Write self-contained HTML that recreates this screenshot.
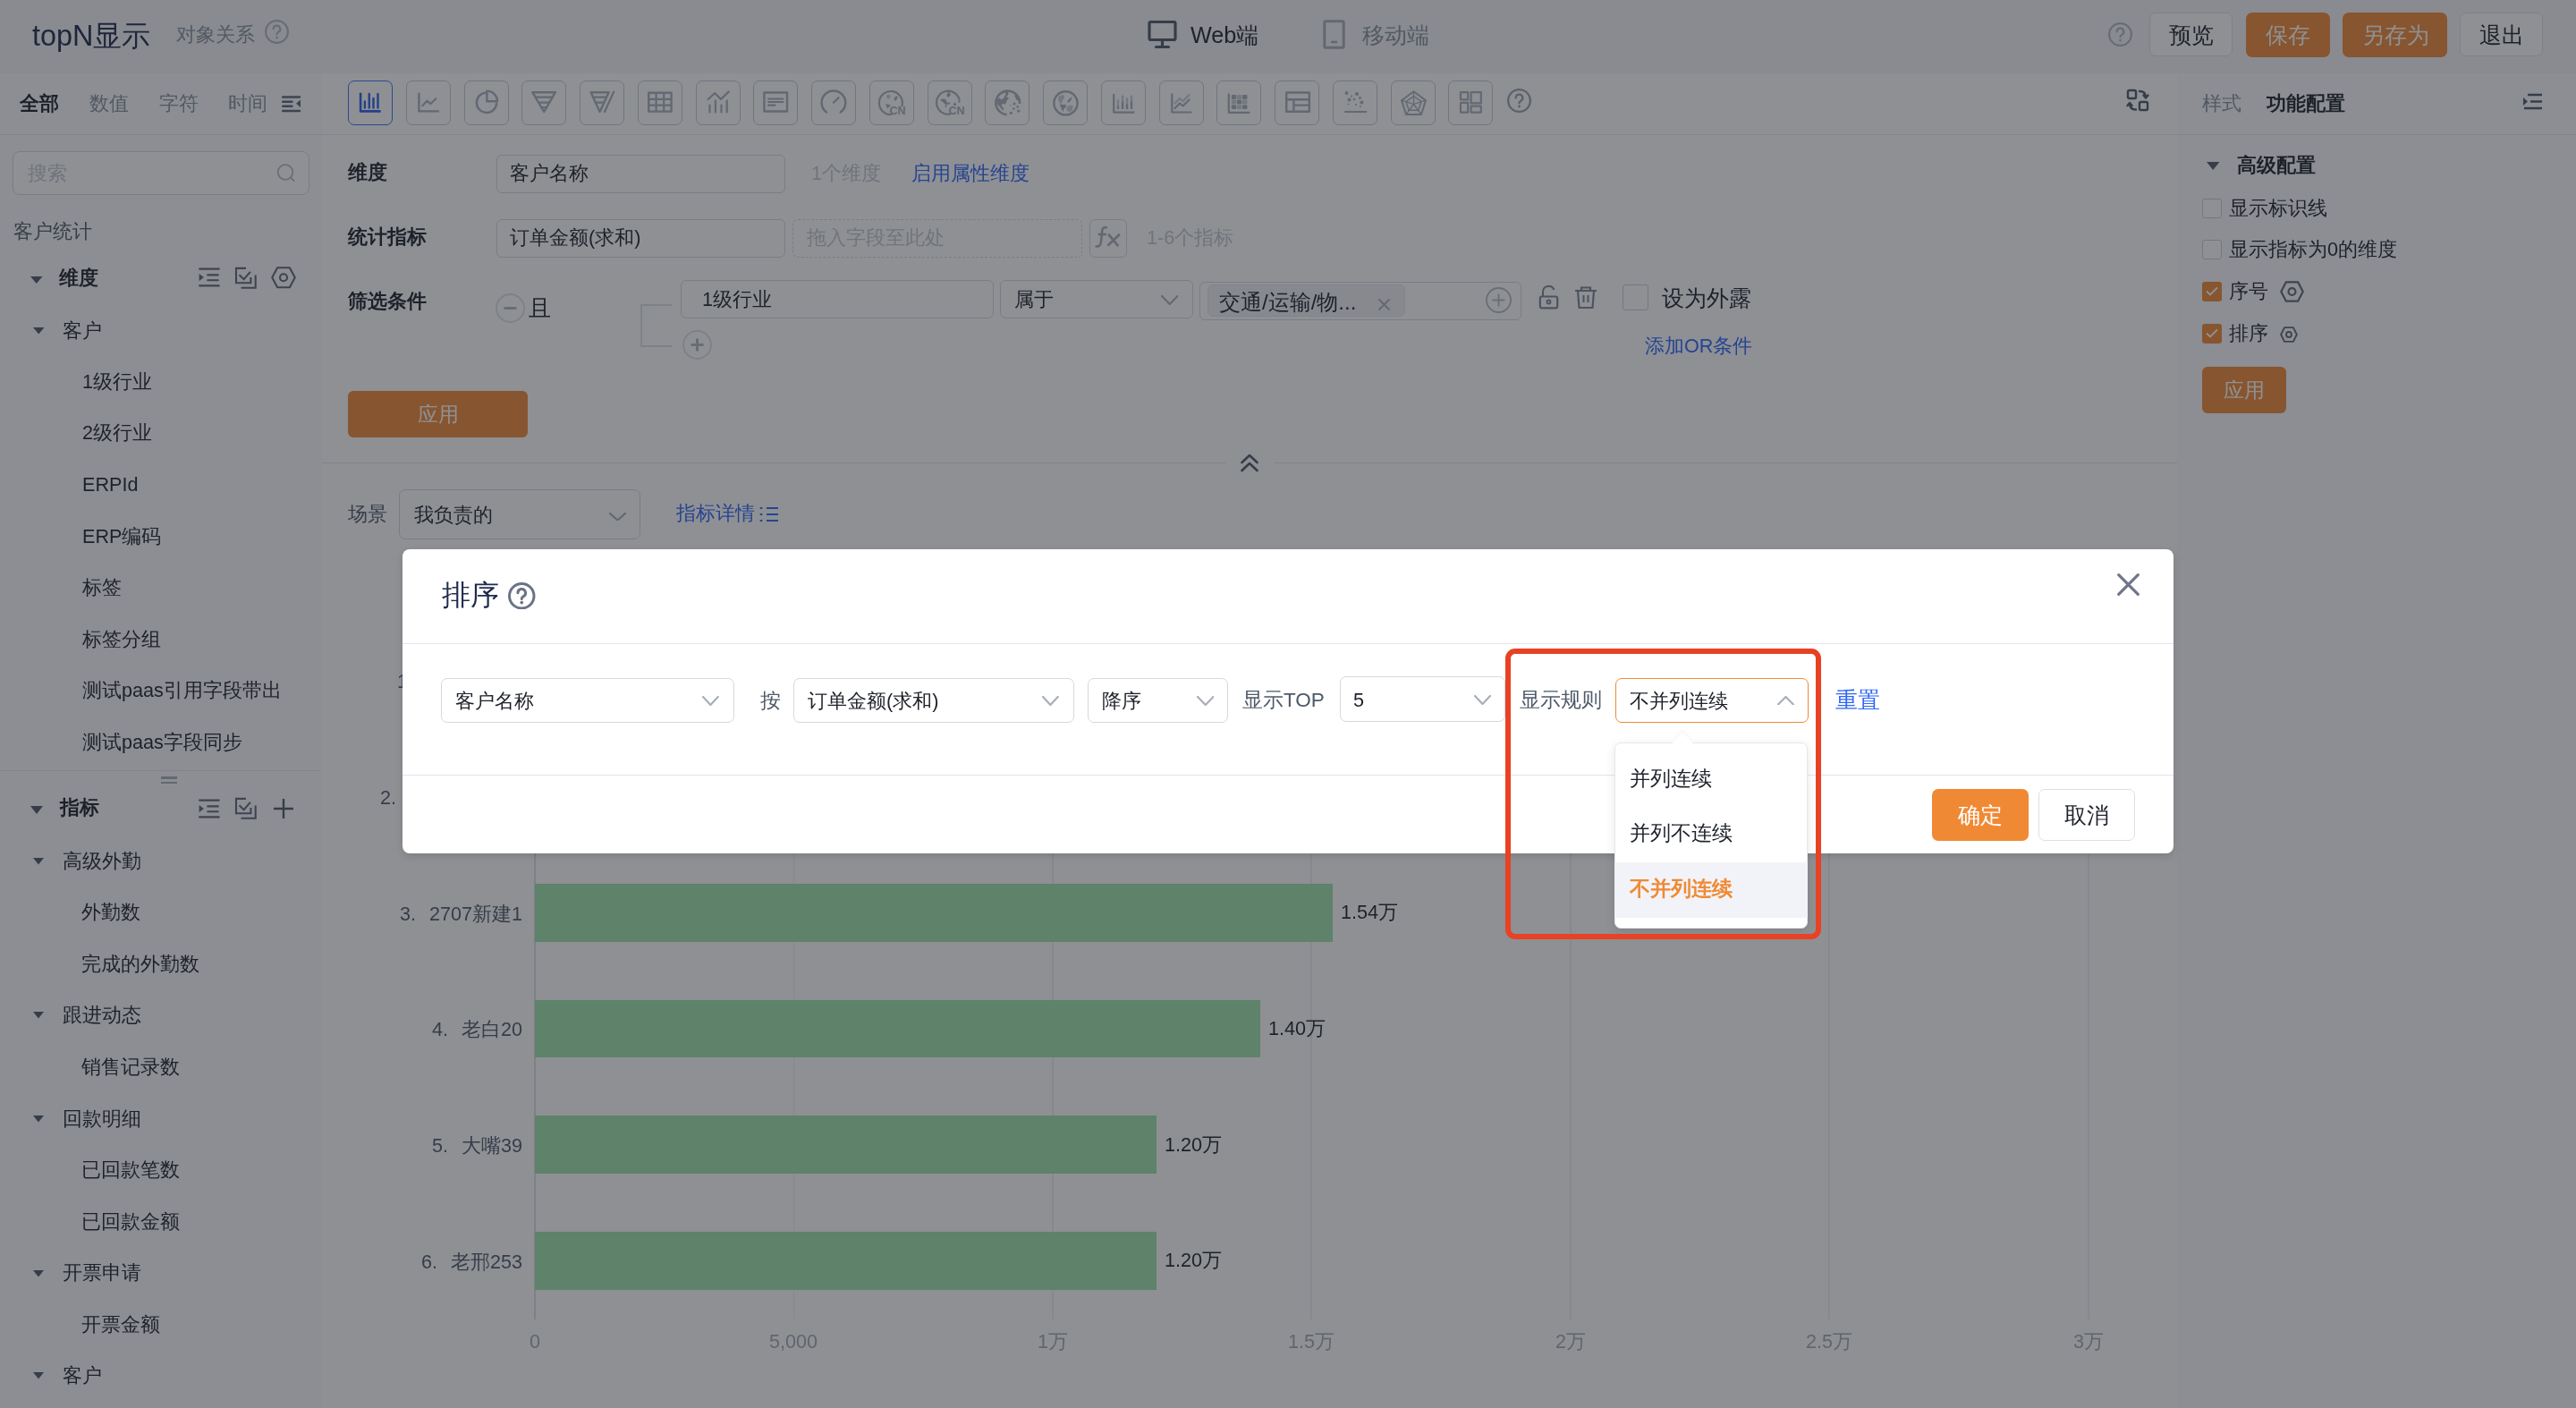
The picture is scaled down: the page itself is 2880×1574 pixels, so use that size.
<!DOCTYPE html><html><head><meta charset="utf-8"><style>
html,body{margin:0;padding:0}
body{width:2880px;height:1574px;position:relative;overflow:hidden;background:#fff;font-family:"Liberation Sans",sans-serif}
.t{position:absolute;white-space:nowrap;will-change:transform}
.b{position:absolute;box-sizing:border-box}
</style></head><body>
<div class="b" style="left:0px;top:0px;width:2880px;height:82px;background:#f4f5f7"></div>
<div class="b" style="left:0px;top:82px;width:360px;height:1492px;background:#fbfbfc"></div>
<div class="b" style="left:360px;top:82px;width:2074px;height:1492px;background:#ffffff"></div>
<div class="b" style="left:2434px;top:82px;width:446px;height:1492px;background:#fbfbfc"></div>
<div class="b" style="left:0px;top:150px;width:2880px;height:1px;background:#e5e6eb"></div>
<div class="t" style="left:36px;top:15.5px;font-size:32.4px;line-height:49px;color:#1f2a4d;font-weight:400;">topN显示</div>
<div class="t" style="left:197px;top:22.5px;font-size:21.6px;line-height:32px;color:#86909c;font-weight:400;">对象关系</div>
<svg class="b" style="left:296.0px;top:21.5px;" width="27" height="27" viewBox="0 0 27 27" fill="none"><g transform="scale(1.125)"><circle cx="12" cy="12" r="11.022222222222222" stroke="#b2b7c0" stroke-width="1.9555555555555557"/><path d="M8.6 9.3 A3.4 3.4 0 1 1 13.6 12.3 C12.6 12.8 12 13.4 12 14.6" stroke="#b2b7c0" stroke-width="1.9555555555555557" stroke-linecap="round" fill="none"/><circle cx="12" cy="17.8" r="1.2124444444444444" fill="#b2b7c0"/></g></svg>
<svg class="b" style="left:1283px;top:22px;" width="33" height="33" viewBox="0 0 33 33" fill="none"><rect x="2" y="2.5" width="29" height="20" rx="1.5" stroke="#4e5969" stroke-width="3.2"/><path d="M16.5 23 V30" stroke="#4e5969" stroke-width="3.2"/><path d="M9.5 30.5 H23.5" stroke="#4e5969" stroke-width="3.2" stroke-linecap="round"/></svg>
<div class="t" style="left:1331px;top:20.0px;font-size:25.2px;line-height:38px;color:#1d2129;font-weight:400;">Web端</div>
<svg class="b" style="left:1479px;top:22px;" width="25" height="33" viewBox="0 0 25 33" fill="none"><rect x="1.8" y="1.8" width="21.4" height="29.4" rx="1.5" stroke="#a9aeb8" stroke-width="3"/><path d="M9 25 H16" stroke="#a9aeb8" stroke-width="2.6"/></svg>
<div class="t" style="left:1523px;top:20.0px;font-size:25.2px;line-height:38px;color:#86909c;font-weight:400;">移动端</div>
<svg class="b" style="left:2357.0px;top:24.5px;" width="27" height="27" viewBox="0 0 27 27" fill="none"><g transform="scale(1.125)"><circle cx="12" cy="12" r="11.022222222222222" stroke="#b2b7c0" stroke-width="1.9555555555555557"/><path d="M8.6 9.3 A3.4 3.4 0 1 1 13.6 12.3 C12.6 12.8 12 13.4 12 14.6" stroke="#b2b7c0" stroke-width="1.9555555555555557" stroke-linecap="round" fill="none"/><circle cx="12" cy="17.8" r="1.2124444444444444" fill="#b2b7c0"/></g></svg>
<div class="b" style="left:2403px;top:14px;width:93px;height:49px;background:#fff;border:1.8px solid #dcdfe6;border-radius:7px"></div>
<div class="t" style="left:2249.5px;width:400px;text-align:center;top:19.5px;font-size:25.2px;line-height:38px;color:#1d2129;font-weight:400;">预览</div>
<div class="b" style="left:2511px;top:14px;width:94px;height:50px;background:#f08934;border-radius:7px"></div>
<div class="t" style="left:2358px;width:400px;text-align:center;top:20.0px;font-size:25.2px;line-height:38px;color:#fff;font-weight:400;">保存</div>
<div class="b" style="left:2619px;top:14px;width:117px;height:50px;background:#f08934;border-radius:7px"></div>
<div class="t" style="left:2477.5px;width:400px;text-align:center;top:20.0px;font-size:25.2px;line-height:38px;color:#fff;font-weight:400;">另存为</div>
<div class="b" style="left:2750px;top:14px;width:93px;height:49px;background:#fff;border:1.8px solid #dcdfe6;border-radius:7px"></div>
<div class="t" style="left:2596.5px;width:400px;text-align:center;top:19.5px;font-size:25.2px;line-height:38px;color:#1d2129;font-weight:400;">退出</div>
<div class="t" style="left:21.5px;top:99.5px;font-size:21.6px;line-height:32px;color:#1d2129;font-weight:700;">全部</div>
<div class="t" style="left:99.5px;top:99.5px;font-size:21.6px;line-height:32px;color:#86909c;font-weight:400;">数值</div>
<div class="t" style="left:178px;top:99.5px;font-size:21.6px;line-height:32px;color:#86909c;font-weight:400;">字符</div>
<div class="t" style="left:255px;top:99.5px;font-size:21.6px;line-height:32px;color:#86909c;font-weight:400;">时间</div>
<svg class="b" style="left:315px;top:106px;" width="22" height="20" viewBox="0 0 22 20" fill="none"><path d="M1.2 2.5 H20 M1.2 7.8 H11.5 M1.2 12.8 H11.5 M1.2 18 H20" stroke="#5c6475" stroke-width="2.4" stroke-linecap="round"/><path d="M21 5.5 V14 L16 9.75 Z" fill="#5c6475"/></svg>
<div class="b" style="left:389.00px;top:90px;width:50px;height:50px;border:1.8px solid #3b6ff5;border-radius:7px"></div>
<svg class="b" style="left:389.00px;top:90px" width="50" height="50" viewBox="0 0 50 50" fill="none"><path d="M14.1 13.8 V34.4 H36.6" stroke="#2d5ee8" stroke-width="2.6" stroke-linecap="butt" stroke-linejoin="round"/><path d="M18.9 23.5 V30.6 M23.75 15 V30.6 M28.5 20 V30.6 M33.5 15 V30.6" stroke="#2d5ee8" stroke-width="2.4" stroke-linecap="round" stroke-linejoin="round"/></svg>
<div class="b" style="left:453.75px;top:90px;width:50px;height:50px;border:1.8px solid #c4c8d0;border-radius:7px"></div>
<svg class="b" style="left:453.75px;top:90px" width="50" height="50" viewBox="0 0 50 50" fill="none"><path d="M14.4 13.8 V34.4 H36.9" stroke="#a8aebb" stroke-width="2.4" stroke-linecap="butt" stroke-linejoin="round"/><path d="M18.3 28.2 L23.6 22.6 L27.2 26.2 L33.4 20.2" stroke="#a8aebb" stroke-width="2.2" stroke-linecap="round" stroke-linejoin="round"/></svg>
<div class="b" style="left:518.50px;top:90px;width:50px;height:50px;border:1.8px solid #c4c8d0;border-radius:7px"></div>
<svg class="b" style="left:518.50px;top:90px" width="50" height="50" viewBox="0 0 50 50" fill="none"><path d="M24 13.6 A11.2 11.2 0 1 0 36.2 25.6" stroke="#a8aebb" stroke-width="2.4" stroke-linecap="round" stroke-linejoin="round"/><path d="M25.4 11.6 V23.2 H37 A11.6 11.6 0 0 0 25.4 11.6 Z" stroke="#a8aebb" stroke-width="2.4" stroke-linecap="round" stroke-linejoin="round"/></svg>
<div class="b" style="left:583.25px;top:90px;width:50px;height:50px;border:1.8px solid #c4c8d0;border-radius:7px"></div>
<svg class="b" style="left:583.25px;top:90px" width="50" height="50" viewBox="0 0 50 50" fill="none"><path d="M12.3 13.2 H37.9 L25.25 35 Z" stroke="#a8aebb" stroke-width="2.4" stroke-linecap="round" stroke-linejoin="round"/><path d="M15.6 18.6 H34.8 M19.2 24.6 H31.3 M22.4 30 H28.1" stroke="#a8aebb" stroke-width="2.2" stroke-linecap="round" stroke-linejoin="round"/></svg>
<div class="b" style="left:648.00px;top:90px;width:50px;height:50px;border:1.8px solid #c4c8d0;border-radius:7px"></div>
<svg class="b" style="left:648.00px;top:90px" width="50" height="50" viewBox="0 0 50 50" fill="none"><path d="M12.6 13.2 H32.6 L22.6 35 Z" stroke="#a8aebb" stroke-width="2.4" stroke-linecap="round" stroke-linejoin="round"/><path d="M15.4 18.6 H29.8 M18.2 24.6 H27 M38.2 12.6 L28 35" stroke="#a8aebb" stroke-width="2.2" stroke-linecap="round" stroke-linejoin="round"/></svg>
<div class="b" style="left:712.75px;top:90px;width:50px;height:50px;border:1.8px solid #c4c8d0;border-radius:7px"></div>
<svg class="b" style="left:712.75px;top:90px" width="50" height="50" viewBox="0 0 50 50" fill="none"><rect x="12.2" y="13.8" width="25.4" height="20.8" stroke="#a8aebb" stroke-width="2.4" stroke-linecap="butt" stroke-linejoin="round"/><path d="M12.2 20.8 H37.6 M12.2 27.6 H37.6 M20.6 13.8 V34.6 M29.2 13.8 V34.6" stroke="#a8aebb" stroke-width="2.2" stroke-linecap="butt" stroke-linejoin="round"/></svg>
<div class="b" style="left:777.50px;top:90px;width:50px;height:50px;border:1.8px solid #c4c8d0;border-radius:7px"></div>
<svg class="b" style="left:777.50px;top:90px" width="50" height="50" viewBox="0 0 50 50" fill="none"><path d="M13.6 21 L21.3 14 L27.9 20.9 L36.9 12.4" stroke="#a8aebb" stroke-width="2.2" stroke-linecap="round" stroke-linejoin="round"/><path d="M15.5 27.5 V35.5 M21.9 22.5 V35.5 M28.5 27.5 V35.5 M34.7 22.5 V35.5" stroke="#a8aebb" stroke-width="2.2" stroke-linecap="round" stroke-linejoin="round"/></svg>
<div class="b" style="left:842.25px;top:90px;width:50px;height:50px;border:1.8px solid #c4c8d0;border-radius:7px"></div>
<svg class="b" style="left:842.25px;top:90px" width="50" height="50" viewBox="0 0 50 50" fill="none"><rect x="12.4" y="13.5" width="25.6" height="21" stroke="#a8aebb" stroke-width="2.4" stroke-linecap="butt" stroke-linejoin="round"/><path d="M17.1 20.5 H33.4 M17.1 24 H33.4 M17.1 27.7 H24.5" stroke="#a8aebb" stroke-width="2.2" stroke-linecap="round" stroke-linejoin="round"/></svg>
<div class="b" style="left:907.00px;top:90px;width:50px;height:50px;border:1.8px solid #c4c8d0;border-radius:7px"></div>
<svg class="b" style="left:907.00px;top:90px" width="50" height="50" viewBox="0 0 50 50" fill="none"><path d="M17.2 35.6 A13.3 13.3 0 1 1 32.6 35.6" stroke="#a8aebb" stroke-width="2.4" stroke-linecap="round" stroke-linejoin="round"/><path d="M24.9 24.8 L30.6 19.2" stroke="#a8aebb" stroke-width="2.2" stroke-linecap="round" stroke-linejoin="round"/></svg>
<div class="b" style="left:971.75px;top:90px;width:50px;height:50px;border:1.8px solid #c4c8d0;border-radius:7px"></div>
<svg class="b" style="left:971.75px;top:90px" width="50" height="50" viewBox="0 0 50 50" fill="none"><path d="M36.4 28.5 A13 13 0 1 0 24.5 38" stroke="#a8aebb" stroke-width="2.2" stroke-linecap="round" stroke-linejoin="round"/><path d="M19 17 Q22 14.5 24 17.5 Q23 21 20 20.5 Z" fill="#cbcfd7"/><path d="M27.5 20 Q30 16 31.5 18 Q31 22 28.5 23 Z M18 26 L24 27.5 L20 31.5 Z" fill="#a8aebb"/><text x="22.5" y="38.2" font-size="12.5" font-weight="700" fill="#a8aebb" font-family="Liberation Sans">CN</text></svg>
<div class="b" style="left:1036.50px;top:90px;width:50px;height:50px;border:1.8px solid #c4c8d0;border-radius:7px"></div>
<svg class="b" style="left:1036.50px;top:90px" width="50" height="50" viewBox="0 0 50 50" fill="none"><path d="M35.5 21 A13 13 0 1 0 25 37.6" stroke="#a8aebb" stroke-width="2.2" stroke-linecap="round" stroke-linejoin="round"/><path d="M14 22 Q17 19 20 21 L23 26 L21 28 L17 24 Z M23.5 11.8 L26 16 L23 19 L21 17 Z" fill="#a8aebb"/><circle cx="24" cy="25.5" r="1.2" fill="#a8aebb"/><circle cx="30.5" cy="26.5" r="1.6" fill="#a8aebb"/><circle cx="35.5" cy="23.5" r="1.2" fill="#a8aebb"/><circle cx="20.5" cy="29" r="1" fill="#a8aebb"/><text x="23.5" y="38.2" font-size="12.5" font-weight="700" fill="#a8aebb" font-family="Liberation Sans">CN</text></svg>
<div class="b" style="left:1101.25px;top:90px;width:50px;height:50px;border:1.8px solid #c4c8d0;border-radius:7px"></div>
<svg class="b" style="left:1101.25px;top:90px" width="50" height="50" viewBox="0 0 50 50" fill="none"><path d="M39 26 A13.3 13.3 0 1 0 24.6 38.2" stroke="#a8aebb" stroke-width="2.6" stroke-linecap="butt" stroke-linejoin="round"/><path d="M13 22 L16.5 19.5 L19 21.5 L21.5 19 L23.5 15 L22 12.5 L25.5 11.5 L26.5 15.5 L24 18 L27 20 L24.5 22.5 L23 27 L20 25.5 L18.5 28 L21.5 31.5 L20 33.5 L17 29.5 L14.5 27 Z" fill="#a8aebb"/><path d="M33.5 14.5 L37 18.5 L38.5 23 L35.5 21.5 L33.5 18 Z" fill="#a8aebb"/><circle cx="33" cy="26" r="1.5" fill="#a8aebb"/><circle cx="28.6" cy="27.9" r="0.7" fill="#a8aebb"/><circle cx="36.7" cy="29.3" r="1.2" fill="#a8aebb"/><circle cx="32.3" cy="31.6" r="1.25" fill="#a8aebb"/><circle cx="37.8" cy="34.1" r="1.7" fill="#a8aebb"/><circle cx="29.4" cy="36.3" r="1.6" fill="#a8aebb"/></svg>
<div class="b" style="left:1166.00px;top:90px;width:50px;height:50px;border:1.8px solid #c4c8d0;border-radius:7px"></div>
<svg class="b" style="left:1166.00px;top:90px" width="50" height="50" viewBox="0 0 50 50" fill="none"><circle cx="25.45" cy="25.3" r="13.1" stroke="#a8aebb" stroke-width="2.4" stroke-linecap="round" stroke-linejoin="round"/><path d="M17.5 18 Q20 15.5 23.5 16.5 Q24.8 19 23 21 Q21 23 20.5 26.5 Q18 25 17.2 22 Z" fill="#cbcfd7"/><path d="M27 23.5 Q28.5 20 32.8 18.3 Q32 22.5 29 24.8 Z" fill="#a8aebb"/><path d="M18.5 27 Q22.5 26.2 26.5 27.5 Q25.5 30.5 23.5 31.5 L22.5 35 Q20.5 32 20 29.5 Z" fill="#a8aebb"/><path d="M26.5 30 Q30 26.5 33.5 28 Q34 32.5 31 35 Q27.5 35.5 26.5 33 Z" fill="#cbcfd7"/></svg>
<div class="b" style="left:1230.75px;top:90px;width:50px;height:50px;border:1.8px solid #c4c8d0;border-radius:7px"></div>
<svg class="b" style="left:1230.75px;top:90px" width="50" height="50" viewBox="0 0 50 50" fill="none"><path d="M14.2 15 V35.6 H37.4" stroke="#a8aebb" stroke-width="2.2" stroke-linecap="butt" stroke-linejoin="round"/><path d="M19 27.9 V31.9 M24.1 23 V31.9 M29 25.7 V31.9 M34 23 V31.9" stroke="#a8aebb" stroke-width="2.4" stroke-linecap="butt" stroke-linejoin="round"/><path d="M19 22.3 V27.5 M24.1 17.5 V22.7 M29 20.1 V25.3 M34 17.5 V22.7" stroke="#cbcfd7" stroke-width="2.4" stroke-linecap="round" stroke-linejoin="round"/></svg>
<div class="b" style="left:1295.50px;top:90px;width:50px;height:50px;border:1.8px solid #c4c8d0;border-radius:7px"></div>
<svg class="b" style="left:1295.50px;top:90px" width="50" height="50" viewBox="0 0 50 50" fill="none"><path d="M14.3 14.6 V35.5 H36.5" stroke="#a8aebb" stroke-width="2.2" stroke-linecap="butt" stroke-linejoin="round"/><path d="M17.5 31 L23 25.5 L26.5 28.5 L33.5 21.5" stroke="#a8aebb" stroke-width="2.2" stroke-linecap="round" stroke-linejoin="round"/><path d="M17.5 25.5 L23 20 L26.5 23 L33.5 16" stroke="#cbcfd7" stroke-width="2.2" stroke-linecap="round" stroke-linejoin="round"/></svg>
<div class="b" style="left:1360.25px;top:90px;width:50px;height:50px;border:1.8px solid #c4c8d0;border-radius:7px"></div>
<svg class="b" style="left:1360.25px;top:90px" width="50" height="50" viewBox="0 0 50 50" fill="none"><path d="M13.75 14.6 V35.9 H37.25" stroke="#a8aebb" stroke-width="2.2" stroke-linecap="butt" stroke-linejoin="round"/><rect x="16.8" y="16.0" width="5.4" height="4.9" rx="1" fill="#a8aebb"/><rect x="22.9" y="16.0" width="5.4" height="4.9" rx="1" fill="#cbcfd7"/><rect x="29.0" y="16.0" width="5.4" height="4.9" rx="1" fill="#a8aebb"/><rect x="16.8" y="21.6" width="5.4" height="4.9" rx="1" fill="#cbcfd7"/><rect x="22.9" y="21.6" width="5.4" height="4.9" rx="1" fill="#a8aebb"/><rect x="29.0" y="21.6" width="5.4" height="4.9" rx="1" fill="#cbcfd7"/><rect x="16.8" y="27.2" width="5.4" height="4.9" rx="1" fill="#a8aebb"/><rect x="22.9" y="27.2" width="5.4" height="4.9" rx="1" fill="#cbcfd7"/><rect x="29.0" y="27.2" width="5.4" height="4.9" rx="1" fill="#a8aebb"/></svg>
<div class="b" style="left:1425.00px;top:90px;width:50px;height:50px;border:1.8px solid #c4c8d0;border-radius:7px"></div>
<svg class="b" style="left:1425.00px;top:90px" width="50" height="50" viewBox="0 0 50 50" fill="none"><rect x="13.2" y="13.5" width="25.6" height="21.2" stroke="#a8aebb" stroke-width="2.4" stroke-linecap="butt" stroke-linejoin="round"/><path d="M13.2 21.2 H38.8 M21.4 21.2 V34.7 M21.4 27.6 H38.8" stroke="#a8aebb" stroke-width="2.4" stroke-linecap="butt" stroke-linejoin="round"/></svg>
<div class="b" style="left:1489.75px;top:90px;width:50px;height:50px;border:1.8px solid #c4c8d0;border-radius:7px"></div>
<svg class="b" style="left:1489.75px;top:90px" width="50" height="50" viewBox="0 0 50 50" fill="none"><circle cx="15.5" cy="14" r="1.9" fill="#a8aebb"/><circle cx="21" cy="17.5" r="1.1" fill="#a8aebb"/><circle cx="27" cy="15" r="2.1" fill="#a8aebb"/><circle cx="18.5" cy="21.5" r="2" fill="#a8aebb"/><circle cx="24" cy="21" r="1.3" fill="#a8aebb"/><circle cx="30.5" cy="19.5" r="1.4" fill="#a8aebb"/><circle cx="32.5" cy="24.5" r="2" fill="#a8aebb"/><circle cx="17.5" cy="26.5" r="0.9" fill="#a8aebb"/><circle cx="26" cy="27" r="1.1" fill="#a8aebb"/><circle cx="31" cy="29" r="0.9" fill="#a8aebb"/><path d="M14 35 H37.2" stroke="#a8aebb" stroke-width="2.2" stroke-linecap="round" stroke-linejoin="round"/></svg>
<div class="b" style="left:1554.50px;top:90px;width:50px;height:50px;border:1.8px solid #c4c8d0;border-radius:7px"></div>
<svg class="b" style="left:1554.50px;top:90px" width="50" height="50" viewBox="0 0 50 50" fill="none"><path d="M25.5 12.3 L39 22.2 L34 38 H17 L12 22.2 Z" stroke="#a8aebb" stroke-width="2" stroke-linecap="round" stroke-linejoin="round"/><path d="M25.5 17.5 L34 23.7 L30.8 33.2 H20.2 L17 23.7 Z" stroke="#a8aebb" stroke-width="1.5" stroke-linecap="round" stroke-linejoin="round"/><path d="M25.5 12.3 V26.5 M39 22.2 L25.5 26.5 M34 38 L25.5 26.5 M17 38 L25.5 26.5 M12 22.2 L25.5 26.5" stroke="#a8aebb" stroke-width="1.3" stroke-linecap="round" stroke-linejoin="round"/></svg>
<div class="b" style="left:1619.25px;top:90px;width:50px;height:50px;border:1.8px solid #c4c8d0;border-radius:7px"></div>
<svg class="b" style="left:1619.25px;top:90px" width="50" height="50" viewBox="0 0 50 50" fill="none"><rect x="14" y="13.2" width="8.2" height="8.2" stroke="#a8aebb" stroke-width="2.2" stroke-linecap="butt" stroke-linejoin="round"/><rect x="25.6" y="13.2" width="11.2" height="12.2" stroke="#a8aebb" stroke-width="2.2" stroke-linecap="butt" stroke-linejoin="round"/><rect x="14" y="24.8" width="8.2" height="10.8" stroke="#a8aebb" stroke-width="2.2" stroke-linecap="butt" stroke-linejoin="round"/><rect x="25.6" y="28.6" width="11.2" height="7" stroke="#a8aebb" stroke-width="2.2" stroke-linecap="butt" stroke-linejoin="round"/></svg>
<svg class="b" style="left:1685.25px;top:98.5px;" width="27" height="27" viewBox="0 0 27 27" fill="none"><g transform="scale(1.125)"><circle cx="12" cy="12" r="10.977777777777778" stroke="#9aa0ac" stroke-width="2.0444444444444443"/><path d="M8.6 9.3 A3.4 3.4 0 1 1 13.6 12.3 C12.6 12.8 12 13.4 12 14.6" stroke="#9aa0ac" stroke-width="2.0444444444444443" stroke-linecap="round" fill="none"/><circle cx="12" cy="17.8" r="1.2675555555555555" fill="#9aa0ac"/></g></svg>
<svg class="b" style="left:2377px;top:99px;" width="27" height="27" viewBox="0 0 27 27" fill="none"><rect x="2" y="2" width="9" height="9" rx="1.5" stroke="#4e5969" stroke-width="2.4" stroke-linecap="round" stroke-linejoin="round"/><rect x="15" y="15" width="9" height="9" rx="1.5" stroke="#4e5969" stroke-width="2.4" stroke-linecap="round" stroke-linejoin="round"/><path d="M15 3 Q22 3 22 10 M19.5 7.5 L22 10.5 L24.5 7.5" stroke="#4e5969" stroke-width="2.4" stroke-linecap="round" stroke-linejoin="round"/><path d="M11 23.5 Q4 23.5 4 16.5 M1.5 19 L4 16 L6.5 19" stroke="#4e5969" stroke-width="2.4" stroke-linecap="round" stroke-linejoin="round"/></svg>
<div class="t" style="left:2462px;top:99.5px;font-size:21.6px;line-height:32px;color:#86909c;font-weight:400;">样式</div>
<div class="t" style="left:2534px;top:99.5px;font-size:21.6px;line-height:32px;color:#1d2129;font-weight:700;">功能配置</div>
<svg class="b" style="left:2820px;top:104px;" width="23" height="20" viewBox="0 0 23 20" fill="none"><path d="M6 2 H22 M9 9.5 H22 M2 17 H22" stroke="#4e5969" stroke-width="2.6"/><path d="M1 5 V14 L6 9.5 Z" fill="#4e5969"/></svg>
<div class="b" style="left:14px;top:169px;width:332px;height:49px;background:#fff;border:1.8px solid #d5d8de;border-radius:8px"></div>
<div class="t" style="left:31px;top:178.0px;font-size:21.6px;line-height:32px;color:#c2c6ce;font-weight:400;">搜索</div>
<svg class="b" style="left:309px;top:183px;" width="21" height="21" viewBox="0 0 21 21" fill="none"><circle cx="10" cy="9.5" r="8.3" stroke="#b5bac3" stroke-width="1.8"/><path d="M16 15.5 L19.5 19" stroke="#b5bac3" stroke-width="1.8" stroke-linecap="round"/></svg>
<div class="t" style="left:14.5px;top:242.5px;font-size:21.6px;line-height:32px;color:#4e5969;font-weight:400;">客户统计</div>
<svg class="b" style="left:34px;top:309px;" width="13.5" height="8" viewBox="0 0 13.5 8" fill="none"><path d="M0 0 L13.5 0 L6.75 8 Z" fill="#4e5969"/></svg>
<div class="t" style="left:66px;top:295.0px;font-size:21.6px;line-height:32px;color:#1d2129;font-weight:700;">维度</div>
<svg class="b" style="left:222px;top:298.5px;" width="25" height="22" viewBox="0 0 25 22" fill="none"><path d="M1.1 1.6 H22.8 M10.2 8.4 H21.8 M10.2 14.3 H21.8 M1.1 20.4 H22.8" stroke="#5f6677" stroke-width="2.1" stroke-linecap="round"/><path d="M0.6 6.9 V15.2 L5.9 11.05 Z" fill="#5f6677"/></svg>
<svg class="b" style="left:262px;top:298px;" width="26" height="26" viewBox="0 0 26 26" fill="none"><path d="M13 1.9 H2 V18.2 H18.4 V12" stroke="#5f6677" stroke-width="2.1"/><path d="M5.5 9.2 L10.6 14.2 L17.9 5.9" stroke="#5f6677" stroke-width="2.1"/><path d="M7.5 23.8 H23.7 V9.5" stroke="#5f6677" stroke-width="2.1"/></svg>
<svg class="b" style="left:303px;top:298px;" width="28" height="24.5" viewBox="0 0 28 24.5" fill="none"><path d="M7.140000000000001 1.25 H20.86 L26.75 12.25 L20.86 23.25 H7.140000000000001 L1.25 12.25 Z" stroke="#5f6677" stroke-width="2.1" stroke-linejoin="round"/><circle cx="14.0" cy="12.25" r="4.0425" stroke="#5f6677" stroke-width="2.1"/></svg>
<svg class="b" style="left:37px;top:365.5px;" width="12.5" height="7.5" viewBox="0 0 12.5 7.5" fill="none"><path d="M0 0 L12.5 0 L6.25 7.5 Z" fill="#4e5969"/></svg>
<div class="t" style="left:70px;top:354.0px;font-size:21.6px;line-height:32px;color:#1d2129;font-weight:400;">客户</div>
<div class="t" style="left:91.5px;top:410.8px;font-size:21.6px;line-height:32px;color:#1d2129;font-weight:400;">1级行业</div>
<div class="t" style="left:91.5px;top:468.4px;font-size:21.6px;line-height:32px;color:#1d2129;font-weight:400;">2级行业</div>
<div class="t" style="left:91.5px;top:526.0px;font-size:21.6px;line-height:32px;color:#1d2129;font-weight:400;">ERPId</div>
<div class="t" style="left:91.5px;top:583.5px;font-size:21.6px;line-height:32px;color:#1d2129;font-weight:400;">ERP编码</div>
<div class="t" style="left:91.5px;top:641.1px;font-size:21.6px;line-height:32px;color:#1d2129;font-weight:400;">标签</div>
<div class="t" style="left:91.5px;top:698.8px;font-size:21.6px;line-height:32px;color:#1d2129;font-weight:400;">标签分组</div>
<div class="t" style="left:91.5px;top:756.4px;font-size:21.6px;line-height:32px;color:#1d2129;font-weight:400;">测试paas引用字段带出</div>
<div class="t" style="left:91.5px;top:814.0px;font-size:21.6px;line-height:32px;color:#1d2129;font-weight:400;">测试paas字段同步</div>
<div class="b" style="left:0px;top:861px;width:359px;height:1px;background:#e5e6eb"></div>
<div class="b" style="left:180px;top:868px;width:18px;height:2.5px;background:#a9aeb8"></div>
<div class="b" style="left:180px;top:873.5px;width:18px;height:2.5px;background:#a9aeb8"></div>
<svg class="b" style="left:34.3px;top:901px;" width="14.0" height="9" viewBox="0 0 14.0 9" fill="none"><path d="M0 0 L14.0 0 L7.0 9 Z" fill="#4e5969"/></svg>
<div class="t" style="left:66.6px;top:887.0px;font-size:21.6px;line-height:32px;color:#1d2129;font-weight:700;">指标</div>
<svg class="b" style="left:222px;top:892.5px;" width="25" height="22" viewBox="0 0 25 22" fill="none"><path d="M1.1 1.6 H22.8 M10.2 8.4 H21.8 M10.2 14.3 H21.8 M1.1 20.4 H22.8" stroke="#5f6677" stroke-width="2.1" stroke-linecap="round"/><path d="M0.6 6.9 V15.2 L5.9 11.05 Z" fill="#5f6677"/></svg>
<svg class="b" style="left:262px;top:891px;" width="26" height="26" viewBox="0 0 26 26" fill="none"><path d="M13 1.9 H2 V18.2 H18.4 V12" stroke="#5f6677" stroke-width="2.1"/><path d="M5.5 9.2 L10.6 14.2 L17.9 5.9" stroke="#5f6677" stroke-width="2.1"/><path d="M7.5 23.8 H23.7 V9.5" stroke="#5f6677" stroke-width="2.1"/></svg>
<svg class="b" style="left:305px;top:892px;" width="24" height="24" viewBox="0 0 24 24" fill="none"><path d="M12 1 V23 M1 12 H23" stroke="#4e5969" stroke-width="2.4"/></svg>
<svg class="b" style="left:37px;top:959.2px;" width="12" height="7.5" viewBox="0 0 12 7.5" fill="none"><path d="M0 0 L12 0 L6.0 7.5 Z" fill="#4e5969"/></svg>
<div class="t" style="left:69.6px;top:946.7px;font-size:21.6px;line-height:32px;color:#1d2129;font-weight:400;">高级外勤</div>
<div class="t" style="left:91px;top:1003.9px;font-size:21.6px;line-height:32px;color:#1d2129;font-weight:400;">外勤数</div>
<div class="t" style="left:91px;top:1062.0px;font-size:21.6px;line-height:32px;color:#1d2129;font-weight:400;">完成的外勤数</div>
<svg class="b" style="left:37px;top:1131.1px;" width="12" height="7.5" viewBox="0 0 12 7.5" fill="none"><path d="M0 0 L12 0 L6.0 7.5 Z" fill="#4e5969"/></svg>
<div class="t" style="left:69.6px;top:1118.6px;font-size:21.6px;line-height:32px;color:#1d2129;font-weight:400;">跟进动态</div>
<div class="t" style="left:91px;top:1177.0px;font-size:21.6px;line-height:32px;color:#1d2129;font-weight:400;">销售记录数</div>
<svg class="b" style="left:37px;top:1247.2px;" width="12" height="7.5" viewBox="0 0 12 7.5" fill="none"><path d="M0 0 L12 0 L6.0 7.5 Z" fill="#4e5969"/></svg>
<div class="t" style="left:69.6px;top:1234.7px;font-size:21.6px;line-height:32px;color:#1d2129;font-weight:400;">回款明细</div>
<div class="t" style="left:91px;top:1291.8px;font-size:21.6px;line-height:32px;color:#1d2129;font-weight:400;">已回款笔数</div>
<div class="t" style="left:91px;top:1349.9px;font-size:21.6px;line-height:32px;color:#1d2129;font-weight:400;">已回款金额</div>
<svg class="b" style="left:37px;top:1419.5px;" width="12" height="7.5" viewBox="0 0 12 7.5" fill="none"><path d="M0 0 L12 0 L6.0 7.5 Z" fill="#4e5969"/></svg>
<div class="t" style="left:69.6px;top:1407.0px;font-size:21.6px;line-height:32px;color:#1d2129;font-weight:400;">开票申请</div>
<div class="t" style="left:91px;top:1465.0px;font-size:21.6px;line-height:32px;color:#1d2129;font-weight:400;">开票金额</div>
<svg class="b" style="left:37px;top:1534.2px;" width="12" height="7.5" viewBox="0 0 12 7.5" fill="none"><path d="M0 0 L12 0 L6.0 7.5 Z" fill="#4e5969"/></svg>
<div class="t" style="left:69.6px;top:1521.7px;font-size:21.6px;line-height:32px;color:#1d2129;font-weight:400;">客户</div>
<div class="t" style="left:388.5px;top:176.5px;font-size:21.6px;line-height:32px;color:#1d2129;font-weight:700;">维度</div>
<div class="t" style="left:388.5px;top:249.0px;font-size:21.6px;line-height:32px;color:#1d2129;font-weight:700;">统计指标</div>
<div class="t" style="left:388.5px;top:321.0px;font-size:21.6px;line-height:32px;color:#1d2129;font-weight:700;">筛选条件</div>
<div class="b" style="left:554.5px;top:172.5px;width:323.0px;height:43.0px;background:#fff;border:1.8px solid #d5d8de;border-radius:6px"></div>
<div class="t" style="left:570px;top:178.0px;font-size:21.6px;line-height:32px;color:#1d2129;font-weight:400;">客户名称</div>
<div class="t" style="left:906.5px;top:178.0px;font-size:21.6px;line-height:32px;color:#c2c6ce;font-weight:400;">1个维度</div>
<div class="t" style="left:1019px;top:178.0px;font-size:21.6px;line-height:32px;color:#2f66f6;font-weight:400;">启用属性维度</div>
<div class="b" style="left:554.5px;top:244.5px;width:323.0px;height:43.0px;background:#fff;border:1.8px solid #d5d8de;border-radius:6px"></div>
<div class="t" style="left:570px;top:250.0px;font-size:21.6px;line-height:32px;color:#1d2129;font-weight:400;">订单金额(求和)</div>
<div class="b" style="left:886px;top:244.5px;width:323.5px;height:43.0px;border:1.8px dashed #d5d8de;border-radius:6px"></div>
<div class="t" style="left:901.5px;top:250.0px;font-size:21.6px;line-height:32px;color:#c2c6ce;font-weight:400;">拖入字段至此处</div>
<div class="b" style="left:1217.5px;top:244.5px;width:42.0px;height:43.0px;background:#fff;border:1.8px solid #d5d8de;border-radius:6px"></div>
<svg class="b" style="left:1217px;top:244px;" width="43" height="44" viewBox="0 0 43 44" fill="none"><path d="M8.5 31.5 Q13.5 32 14 26 L15.3 13 Q16 9.8 19.8 10.3" stroke="#a9aeb8" stroke-width="2.6" stroke-linecap="round" fill="none"/><path d="M10.8 18 H19.8" stroke="#a9aeb8" stroke-width="2.6" stroke-linecap="butt"/><path d="M22.8 18.6 L32.7 30.3 M34.2 18.6 L22.3 29.8" stroke="#a9aeb8" stroke-width="2.8" stroke-linecap="round"/></svg>
<div class="t" style="left:1282px;top:250.0px;font-size:21.6px;line-height:32px;color:#c2c6ce;font-weight:400;">1-6个指标</div>
<svg class="b" style="left:554px;top:328px;" width="33" height="33" viewBox="0 0 33 33" fill="none"><circle cx="16.5" cy="16.5" r="15.5" stroke="#dcdfe4" stroke-width="1.8"/><path d="M9.5 16.5 H23.5" stroke="#b5bac3" stroke-width="3"/></svg>
<div class="t" style="left:591px;top:324.5px;font-size:25.2px;line-height:38px;color:#1d2129;font-weight:400;">且</div>
<svg class="b" style="left:716px;top:340px;" width="36" height="48" viewBox="0 0 36 48" fill="none"><path d="M35 1 H1 V47 H35" stroke="#dcdfe4" stroke-width="1.8"/></svg>
<div class="b" style="left:761px;top:313px;width:349.5px;height:42.5px;background:#fff;border:1.8px solid #d5d8de;border-radius:6px"></div>
<div class="t" style="left:785px;top:318.5px;font-size:21.6px;line-height:32px;color:#1d2129;font-weight:400;">1级行业</div>
<svg class="b" style="left:763px;top:369px;" width="33" height="33" viewBox="0 0 33 33" fill="none"><circle cx="16.5" cy="16.5" r="15.5" stroke="#dcdfe4" stroke-width="1.8"/><path d="M9.5 16.5 H23.5 M16.5 9.5 V23.5" stroke="#b5bac3" stroke-width="3"/></svg>
<div class="b" style="left:1118px;top:313px;width:216px;height:42.5px;background:#fff;border:1.8px solid #d5d8de;border-radius:6px"></div>
<div class="t" style="left:1134px;top:318.5px;font-size:21.6px;line-height:32px;color:#1d2129;font-weight:400;">属于</div>
<svg class="b" style="left:1297.5px;top:329.5px;" width="19.5" height="11.0" viewBox="0 0 19.5 11.0" fill="none"><path d="M1 1 L9.75 10.0 L18.5 1" stroke="#a9aeb8" stroke-width="2.2" stroke-linecap="round" stroke-linejoin="round"/></svg>
<div class="b" style="left:1341px;top:315px;width:359.5px;height:42.5px;background:#fff;border:1.8px solid #d5d8de;border-radius:6px"></div>
<div class="b" style="left:1350px;top:318px;width:220.5px;height:36px;background:#f0f1f5;border-radius:6px;border:1px solid #e5e6eb"></div>
<div class="t" style="left:1363px;top:320.0px;font-size:24px;line-height:36px;color:#1d2129;font-weight:400;">交通/运输/物...</div>
<svg class="b" style="left:1540px;top:333px;" width="15" height="15" viewBox="0 0 15 15" fill="none"><path d="M1.5 1.5 L13.5 13.5 M13.5 1.5 L1.5 13.5" stroke="#a9aeb8" stroke-width="1.8"/></svg>
<svg class="b" style="left:1661px;top:320.5px;" width="29" height="29" viewBox="0 0 29 29" fill="none"><circle cx="14.5" cy="14.5" r="13.5" stroke="#b5bac3" stroke-width="1.8"/><path d="M7.5 14.5 H21.5 M14.5 7.5 V21.5" stroke="#b5bac3" stroke-width="1.8"/></svg>
<svg class="b" style="left:1720px;top:319px;" width="23" height="27" viewBox="0 0 23 27" fill="none"><path d="M5 12 V7 A6.5 6.5 0 0 1 17.5 5" stroke="#7d8494" stroke-width="2.0" fill="none"/><rect x="1.8" y="12.5" width="19.4" height="12.8" rx="2" stroke="#7d8494" stroke-width="2.2"/><circle cx="11.5" cy="18.5" r="2" stroke="#7d8494" stroke-width="1.9"/></svg>
<svg class="b" style="left:1759px;top:319px;" width="28" height="27" viewBox="0 0 28 27" fill="none"><path d="M2 6 H26 M9 6 V2.5 H19 V6" stroke="#7d8494" stroke-width="2.2"/><path d="M5 6 L6.5 25 H21.5 L23 6" stroke="#7d8494" stroke-width="2.2" stroke-linejoin="round"/><path d="M11.5 11 V19 M16.5 11 V19" stroke="#7d8494" stroke-width="2.0"/></svg>
<div class="b" style="left:1814px;top:318px;width:29px;height:29px;background:#fff;border:1.8px solid #c9cdd4;border-radius:3px"></div>
<div class="t" style="left:1858px;top:313.5px;font-size:25.2px;line-height:38px;color:#1d2129;font-weight:400;">设为外露</div>
<div class="t" style="left:1839px;top:371.0px;font-size:21.6px;line-height:32px;color:#2f66f6;font-weight:400;">添加OR条件</div>
<div class="b" style="left:389px;top:437px;width:201px;height:52px;background:#f08934;border-radius:6px"></div>
<div class="t" style="left:289.5px;width:400px;text-align:center;top:445.5px;font-size:23.4px;line-height:35px;color:#fff;font-weight:400;">应用</div>
<div class="b" style="left:360px;top:517px;width:1010px;height:1.2000000000000455px;background:#e3e5ea"></div>
<div class="b" style="left:1424px;top:517px;width:1010px;height:1.2000000000000455px;background:#e3e5ea"></div>
<svg class="b" style="left:1386px;top:507px;" width="22" height="22" viewBox="0 0 22 22" fill="none"><path d="M2.5 10 L11 2 L19.5 10 M2.5 19 L11 11 L19.5 19" stroke="#4e5969" stroke-width="2.6" stroke-linecap="round" stroke-linejoin="round"/></svg>
<div class="t" style="left:388.5px;top:559.0px;font-size:21.6px;line-height:32px;color:#4e5969;font-weight:400;">场景</div>
<div class="b" style="left:446px;top:547px;width:269.5px;height:56px;background:#fff;border:1.8px solid #d5d8de;border-radius:6px;border-radius:7px"></div>
<div class="t" style="left:463px;top:559.5px;font-size:21.6px;line-height:32px;color:#1d2129;font-weight:400;">我负责的</div>
<svg class="b" style="left:681px;top:572.5px;" width="19" height="9.5" viewBox="0 0 19 9.5" fill="none"><path d="M1 1 L9.5 8.5 L18 1" stroke="#a9aeb8" stroke-width="2.2" stroke-linecap="round" stroke-linejoin="round"/></svg>
<div class="t" style="left:756px;top:558.0px;font-size:21.6px;line-height:32px;color:#2f66f6;font-weight:400;">指标详情</div>
<svg class="b" style="left:849px;top:563px;" width="22" height="22" viewBox="0 0 22 22" fill="none"><path d="M2 4 V6 M2 11 V13 M2 18 V20" stroke="#2f66f6" stroke-width="2.6"/><path d="M8 5 H21 M8 12 H21 M8 19 H21" stroke="#2f66f6" stroke-width="2.2"/></svg>
<div class="b" style="left:597.1px;top:620px;width:1.7999999999999545px;height:855px;background:#dcdfe4"></div>
<div class="b" style="left:886.5600000000001px;top:620px;width:1.7999999999999545px;height:855px;background:#eef0f3"></div>
<div class="b" style="left:1176.02px;top:620px;width:1.800000000000182px;height:855px;background:#eef0f3"></div>
<div class="b" style="left:1465.4799999999998px;top:620px;width:1.800000000000182px;height:855px;background:#eef0f3"></div>
<div class="b" style="left:1754.9399999999998px;top:620px;width:1.800000000000182px;height:855px;background:#eef0f3"></div>
<div class="b" style="left:2044.3999999999999px;top:620px;width:1.800000000000182px;height:855px;background:#eef0f3"></div>
<div class="b" style="left:2333.8599999999997px;top:620px;width:1.800000000000182px;height:855px;background:#eef0f3"></div>
<div class="b" style="left:598px;top:728.7px;width:752.5999999999999px;height:64.5px;background:#9fe3ab"></div>
<div class="t" style="left:444px;top:746.1px;font-size:21.6px;line-height:32px;color:#4e5969;font-weight:400;">1.<span style="display:inline-block;width:15px"></span>测试客户小王1</div>
<div class="t" style="left:1360.096px;top:744.9px;font-size:21.6px;line-height:32px;color:#1d2129;font-weight:400;">1.30万</div>
<div class="b" style="left:598px;top:858.3px;width:926.3px;height:64.5px;background:#9fe3ab"></div>
<div class="t" style="left:425px;top:875.8px;font-size:21.6px;line-height:32px;color:#4e5969;font-weight:400;">2.<span style="display:inline-block;width:15px"></span>测试客户名称</div>
<div class="t" style="left:1533.772px;top:874.6px;font-size:21.6px;line-height:32px;color:#1d2129;font-weight:400;">1.60万</div>
<div class="b" style="left:598px;top:988.0px;width:891.5px;height:64.5px;background:#9fe3ab"></div>
<div class="t" style="right:2295.5px;top:1005.5px;font-size:21.6px;line-height:32px;color:#4e5969;font-weight:400;text-align:right;">3.<span style="display:inline-block;width:15px"></span>2707新建1</div>
<div class="t" style="left:1499.0367999999999px;top:1004.2px;font-size:21.6px;line-height:32px;color:#1d2129;font-weight:400;">1.54万</div>
<div class="b" style="left:598px;top:1117.7px;width:810.5px;height:64.5px;background:#9fe3ab"></div>
<div class="t" style="right:2295.5px;top:1135.1px;font-size:21.6px;line-height:32px;color:#4e5969;font-weight:400;text-align:right;">4.<span style="display:inline-block;width:15px"></span>老白20</div>
<div class="t" style="left:1417.9879999999998px;top:1133.9px;font-size:21.6px;line-height:32px;color:#1d2129;font-weight:400;">1.40万</div>
<div class="b" style="left:598px;top:1247.3px;width:694.7px;height:64.5px;background:#9fe3ab"></div>
<div class="t" style="right:2295.5px;top:1264.8px;font-size:21.6px;line-height:32px;color:#4e5969;font-weight:400;text-align:right;">5.<span style="display:inline-block;width:15px"></span>大嘴39</div>
<div class="t" style="left:1302.204px;top:1263.6px;font-size:21.6px;line-height:32px;color:#1d2129;font-weight:400;">1.20万</div>
<div class="b" style="left:598px;top:1377.0px;width:694.7px;height:64.5px;background:#9fe3ab"></div>
<div class="t" style="right:2295.5px;top:1394.5px;font-size:21.6px;line-height:32px;color:#4e5969;font-weight:400;text-align:right;">6.<span style="display:inline-block;width:15px"></span>老邢253</div>
<div class="t" style="left:1302.204px;top:1393.3px;font-size:21.6px;line-height:32px;color:#1d2129;font-weight:400;">1.20万</div>
<div class="t" style="left:398.0px;width:400px;text-align:center;top:1483.5px;font-size:21.6px;line-height:32px;color:#a3a8b2;font-weight:400;">0</div>
<div class="t" style="left:687.46px;width:400px;text-align:center;top:1483.5px;font-size:21.6px;line-height:32px;color:#a3a8b2;font-weight:400;">5,000</div>
<div class="t" style="left:976.9200000000001px;width:400px;text-align:center;top:1483.5px;font-size:21.6px;line-height:32px;color:#a3a8b2;font-weight:400;">1万</div>
<div class="t" style="left:1266.3799999999999px;width:400px;text-align:center;top:1483.5px;font-size:21.6px;line-height:32px;color:#a3a8b2;font-weight:400;">1.5万</div>
<div class="t" style="left:1555.84px;width:400px;text-align:center;top:1483.5px;font-size:21.6px;line-height:32px;color:#a3a8b2;font-weight:400;">2万</div>
<div class="t" style="left:1845.3px;width:400px;text-align:center;top:1483.5px;font-size:21.6px;line-height:32px;color:#a3a8b2;font-weight:400;">2.5万</div>
<div class="t" style="left:2134.7599999999998px;width:400px;text-align:center;top:1483.5px;font-size:21.6px;line-height:32px;color:#a3a8b2;font-weight:400;">3万</div>
<svg class="b" style="left:2466.5px;top:181px;" width="14.5" height="9" viewBox="0 0 14.5 9" fill="none"><path d="M0 0 L14.5 0 L7.25 9 Z" fill="#4e5969"/></svg>
<div class="t" style="left:2500.5px;top:168.5px;font-size:21.6px;line-height:32px;color:#1d2129;font-weight:700;">高级配置</div>
<div class="b" style="left:2462px;top:222px;width:21.5px;height:21.5px;background:#fff;border:1.8px solid #c9cdd4;border-radius:3px"></div>
<div class="t" style="left:2492px;top:216.5px;font-size:21.6px;line-height:32px;color:#1d2129;font-weight:400;">显示标识线</div>
<div class="b" style="left:2462px;top:268px;width:21.5px;height:21.5px;background:#fff;border:1.8px solid #c9cdd4;border-radius:3px"></div>
<div class="t" style="left:2492px;top:263.0px;font-size:21.6px;line-height:32px;color:#1d2129;font-weight:400;">显示指标为0的维度</div>
<div class="b" style="left:2462px;top:315px;width:21.5px;height:21.5px;background:#f08934;border-radius:3px"></div>
<svg class="b" style="left:2466px;top:320px;" width="14" height="11" viewBox="0 0 14 11" fill="none"><path d="M1 5.5 L5 9.5 L13 1.5" stroke="#fff" stroke-width="1.8"/></svg>
<div class="t" style="left:2492px;top:309.5px;font-size:21.6px;line-height:32px;color:#1d2129;font-weight:400;">序号</div>
<svg class="b" style="left:2548.5px;top:314px;" width="27" height="24" viewBox="0 0 27 24" fill="none"><path d="M6.885 1.3 H20.115 L25.7 12.0 L20.115 22.7 H6.885 L1.3 12.0 Z" stroke="#5f6677" stroke-width="2.2" stroke-linejoin="round"/><circle cx="13.5" cy="12.0" r="3.96" stroke="#5f6677" stroke-width="2.2"/></svg>
<div class="b" style="left:2462px;top:362px;width:21.5px;height:21.5px;background:#f08934;border-radius:3px"></div>
<svg class="b" style="left:2466px;top:367px;" width="14" height="11" viewBox="0 0 14 11" fill="none"><path d="M1 5.5 L5 9.5 L13 1.5" stroke="#fff" stroke-width="1.8"/></svg>
<div class="t" style="left:2492px;top:356.5px;font-size:21.6px;line-height:32px;color:#1d2129;font-weight:400;">排序</div>
<svg class="b" style="left:2548.5px;top:365px;" width="20" height="18" viewBox="0 0 20 18" fill="none"><path d="M5.1 1.15 H14.9 L18.85 9.0 L14.9 16.85 H5.1 L1.15 9.0 Z" stroke="#5f6677" stroke-width="1.9" stroke-linejoin="round"/><circle cx="10.0" cy="9.0" r="2.97" stroke="#5f6677" stroke-width="1.9"/></svg>
<div class="b" style="left:2462px;top:410px;width:94px;height:52px;background:#f08934;border-radius:6px"></div>
<div class="t" style="left:2309px;width:400px;text-align:center;top:418.5px;font-size:23.4px;line-height:35px;color:#fff;font-weight:400;">应用</div>
<div class="b" style="left:0px;top:0px;width:2880px;height:1574px;background:rgba(29,33,41,0.5)"></div>
<div class="b" style="left:450px;top:614px;width:1980px;height:340px;background:#fff;border-radius:8px;box-shadow:0 3px 9px rgba(0,0,0,0.13)"></div>
<div class="t" style="left:494px;top:640.5px;font-size:32.4px;line-height:49px;color:#1f2a4d;font-weight:400;">排序</div>
<svg class="b" style="left:568.0px;top:650.5px;" width="30.5" height="30.5" viewBox="0 0 30.5 30.5" fill="none"><g transform="scale(1.2708333333333333)"><circle cx="12" cy="12" r="10.819672131147541" stroke="#6b7385" stroke-width="2.360655737704918"/><path d="M8.6 9.3 A3.4 3.4 0 1 1 13.6 12.3 C12.6 12.8 12 13.4 12 14.6" stroke="#6b7385" stroke-width="2.360655737704918" stroke-linecap="round" fill="none"/><circle cx="12" cy="17.8" r="1.4636065573770491" fill="#6b7385"/></g></svg>
<svg class="b" style="left:2367px;top:640.5px;" width="25" height="25" viewBox="0 0 25 25" fill="none"><path d="M1.7 1.7 L23.3 23.3 M23.3 1.7 L1.7 23.3" stroke="#6e7687" stroke-width="3.2" stroke-linecap="round"/></svg>
<div class="b" style="left:450px;top:719px;width:1980px;height:1.2000000000000455px;background:#e3e5ea"></div>
<div class="b" style="left:493px;top:758px;width:328px;height:49.5px;background:#fff;border:1.8px solid #d5d8de;border-radius:7px"></div>
<div class="t" style="left:509px;top:767.5px;font-size:21.6px;line-height:32px;color:#1d2129;font-weight:400;">客户名称</div>
<svg class="b" style="left:785px;top:778px;" width="18.75" height="11" viewBox="0 0 18.75 11" fill="none"><path d="M1 1 L9.375 10 L17.75 1" stroke="#a9aeb8" stroke-width="2.2" stroke-linecap="round" stroke-linejoin="round"/></svg>
<div class="t" style="left:849.5px;top:765.5px;font-size:23.4px;line-height:35px;color:#4e5969;font-weight:400;">按</div>
<div class="b" style="left:887px;top:758px;width:313.5px;height:49.5px;background:#fff;border:1.8px solid #d5d8de;border-radius:7px"></div>
<div class="t" style="left:902.75px;top:767.5px;font-size:21.6px;line-height:32px;color:#1d2129;font-weight:400;">订单金额(求和)</div>
<svg class="b" style="left:1165px;top:778px;" width="18.75" height="11" viewBox="0 0 18.75 11" fill="none"><path d="M1 1 L9.375 10 L17.75 1" stroke="#a9aeb8" stroke-width="2.2" stroke-linecap="round" stroke-linejoin="round"/></svg>
<div class="b" style="left:1215.5px;top:758px;width:157.0px;height:49.5px;background:#fff;border:1.8px solid #d5d8de;border-radius:7px"></div>
<div class="t" style="left:1231.5px;top:767.5px;font-size:21.6px;line-height:32px;color:#1d2129;font-weight:400;">降序</div>
<svg class="b" style="left:1337.5px;top:778px;" width="19.5" height="11" viewBox="0 0 19.5 11" fill="none"><path d="M1 1 L9.75 10 L18.5 1" stroke="#a9aeb8" stroke-width="2.2" stroke-linecap="round" stroke-linejoin="round"/></svg>
<div class="t" style="left:1388.5px;top:766.0px;font-size:22.5px;line-height:34px;color:#4e5969;font-weight:400;">显示TOP</div>
<div class="b" style="left:1497.5px;top:756px;width:185.0px;height:50.75px;background:#fff;border:1.8px solid #d5d8de;border-radius:7px"></div>
<div class="t" style="left:1513px;top:766.5px;font-size:21.6px;line-height:32px;color:#1d2129;font-weight:400;">5</div>
<svg class="b" style="left:1648px;top:777px;" width="19" height="11" viewBox="0 0 19 11" fill="none"><path d="M1 1 L9.5 10 L18 1" stroke="#a9aeb8" stroke-width="2.2" stroke-linecap="round" stroke-linejoin="round"/></svg>
<div class="t" style="left:1699px;top:765.5px;font-size:22.5px;line-height:34px;color:#4e5969;font-weight:400;">显示规则</div>
<div class="b" style="left:1806px;top:758px;width:215.75px;height:49.5px;background:#fff;border:1.8px solid #f08934;border-radius:7px"></div>
<div class="t" style="left:1822px;top:767.5px;font-size:21.6px;line-height:32px;color:#1d2129;font-weight:400;">不并列连续</div>
<svg class="b" style="left:1986.75px;top:777.5px;" width="19.0" height="10.5" viewBox="0 0 19.0 10.5" fill="none"><path d="M1 9.5 L9.5 1 L18.0 9.5" stroke="#a9aeb8" stroke-width="2.2" stroke-linecap="round" stroke-linejoin="round"/></svg>
<div class="t" style="left:2051.5px;top:762.6px;font-size:25.2px;line-height:38px;color:#2f66f6;font-weight:400;">重置</div>
<div class="b" style="left:450px;top:866px;width:1980px;height:1.2000000000000455px;background:#e3e5ea"></div>
<div class="b" style="left:2160px;top:882px;width:108px;height:58px;background:#f08934;border-radius:7px"></div>
<div class="t" style="left:2014px;width:400px;text-align:center;top:892.0px;font-size:25.2px;line-height:38px;color:#fff;font-weight:400;">确定</div>
<div class="b" style="left:2279px;top:882px;width:108px;height:58px;background:#fff;border:1.8px solid #dcdfe6;border-radius:7px"></div>
<div class="t" style="left:2133px;width:400px;text-align:center;top:892.0px;font-size:25.2px;line-height:38px;color:#1d2129;font-weight:400;">取消</div>
<div class="b" style="left:1805px;top:829.5px;width:216px;height:208px;background:#fff;border:1px solid #e6e8ee;border-radius:7px;box-shadow:0 3px 12px rgba(0,0,0,0.10)"></div>
<div class="b" style="left:1873px;top:822px;width:16px;height:16px;background:#fff;transform:rotate(45deg);box-shadow:-2px -2px 4px rgba(0,0,0,0.04)"></div>
<div class="b" style="left:1805px;top:963.75px;width:216px;height:62.0px;background:#f2f3f8"></div>
<div class="t" style="left:1821.5px;top:853.0px;font-size:23.4px;line-height:35px;color:#1d2129;font-weight:400;">并列连续</div>
<div class="t" style="left:1821.5px;top:914.2px;font-size:23.4px;line-height:35px;color:#1d2129;font-weight:400;">并列不连续</div>
<div class="t" style="left:1821.5px;top:975.5px;font-size:23.4px;line-height:35px;color:#f08934;font-weight:700;">不并列连续</div>
<div class="b" style="left:1683px;top:725px;width:353px;height:325px;border:6px solid #e84124;border-radius:11px"></div>
<!--MORE-->
</body></html>
